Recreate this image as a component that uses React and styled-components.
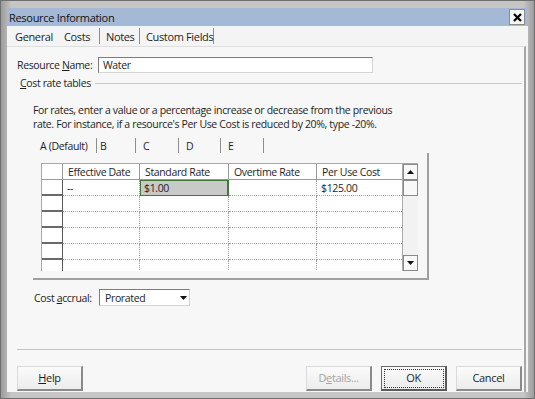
import styled, { createGlobalStyle } from "styled-components";

const GlobalStyle = createGlobalStyle`
  html, body { margin: 0; padding: 0; background: #a9a9a9; }
  body {
    font-family: "Open Sans", "Noto Sans", sans-serif;
    font-size: 10.5px;
    letter-spacing: -0.35px;
    color: #1e1e1e;
    white-space: nowrap;
  }
  * { box-sizing: border-box; }
`;

const Frame = styled.div`
  width: 535px;
  height: 399px;
  border: 1px solid #6e6e6e;
  background: linear-gradient(90deg, #9c9c9c, #c6c6c6 2%, #c6c6c6 98%, #9c9c9c);
  padding: 7px 6px 6px 6px;
  display: flex;
  flex-direction: column;
`;

const TitleBar = styled.div`
  height: 18px;
  background: #a4b9d6;
  display: flex;
  align-items: center;
  justify-content: space-between;
  padding: 0 3px 0 2px;
  font-size: 11px;
  letter-spacing: -0.3px;
  color: #111;
`;

const CloseBox = styled.div`
  width: 16px;
  height: 16px;
  background: #f6f6f6;
  border: 1px solid #8c8c8c;
  display: flex;
  align-items: center;
  justify-content: center;
`;

const Body = styled.div`
  flex: 1;
  display: flex;
  flex-direction: column;
  background: #f4f4f4;
`;

const TabStrip = styled.div`
  height: 20px;
  display: flex;
  align-items: center;
  padding-left: 2px;
`;

const Tab = styled.div`
  width: ${(p) => p.$w}px;
  height: 16px;
  display: flex;
  align-items: center;
  padding-left: ${(p) => p.$pl ?? 6}px;
  border-right: ${(p) => (p.$sep ? "1px solid #8e8e8e" : "none")};
  font-size: 11px;
`;

const Panel = styled.div`
  flex: 1;
  display: flex;
  flex-direction: column;
  border-top: 1px solid #dedede;
  border-right: 2px solid #a6a6a6;
  background: #f7f7f7;
  margin-right: 2px;
`;

const NameRow = styled.div`
  display: flex;
  align-items: center;
  margin: 10px 0 0 10px;
  height: 16px;
`;

const Label = styled.div`
  width: ${(p) => p.$w}px;
`;

const TextInput = styled.div`
  width: 275px;
  height: 16px;
  background: #fff;
  border: 1px solid #d4d4d4;
  border-top-color: #7c7c7c;
  border-left-color: #7c7c7c;
  padding-left: 4px;
  display: flex;
  align-items: center;
`;

const GroupHead = styled.div`
  display: flex;
  align-items: center;
  margin: 3px 2px 0 13px;
  height: 14px;
  gap: 4px;
  &::after {
    content: "";
    flex: 1;
    border-top: 1px solid #c8c8c8;
  }
`;

const Note = styled.p`
  margin: 13px 0 0 26px;
  line-height: 14px;
`;

const SubTabs = styled.div`
  display: flex;
  margin: 7px 0 0 33px;
  height: 15px;
`;

const SubTab = styled.div`
  width: ${(p) => p.$w}px;
  padding-left: ${(p) => p.$pl ?? 7}px;
  border-right: 1px solid #8e8e8e;
  display: flex;
  align-items: center;
`;

const TablePanel = styled.div`
  width: 396px;
  margin-left: 26px;
  padding: 10px 9px 7px 8px;
  border-right: 2px solid #a0a0a0;
  border-bottom: 2px solid #a0a0a0;
`;

const Grid = styled.div`
  display: flex;
  height: 108px;
  border-top: 1px solid #a8a8a8;
  border-left: 1px solid #a8a8a8;
  background: #fff;
`;

const Rows = styled.div`
  width: 362px;
  overflow: hidden;
  display: flex;
  flex-direction: column;
`;

const Row = styled.div`
  display: grid;
  grid-template-columns: 21px 77px 89px 88px 87px;
  height: 16px;
  flex: none;
`;

const HeadCell = styled.div`
  border-right: 1px solid #9a9a9a;
  border-bottom: 1px solid #9a9a9a;
  padding-left: 5px;
  display: flex;
  align-items: center;
  background: #fff;
`;

const RowHead = styled.div`
  border-right: 1px solid #5a5a5a;
  border-bottom: 2px solid #6a6a6a;
  background: #fff;
`;

const Cell = styled.div`
  border-right: 1px dotted #a0a0a0;
  border-bottom: 1px dotted #a0a0a0;
  padding-left: 4px;
  display: flex;
  align-items: center;
  ${(p) =>
    p.$sel &&
    `background: #c9c9c9; border: 1px solid #3f7a34; border-right-width: 2px; padding-left: 3px;`}
`;

const Scroll = styled.div`
  width: 16px;
  display: flex;
  flex-direction: column;
  border-left: 1px solid #a8a8a8;
  background: #f2f2f2;
`;

const ScrollBtn = styled.div`
  height: 16px;
  border: 1px solid #8a8a8a;
  background: #f8f8f8;
  display: flex;
  align-items: center;
  justify-content: center;
`;

const ScrollTrack = styled.div`
  flex: 1;
`;

const AccrualRow = styled.div`
  display: flex;
  align-items: center;
  margin: 9px 0 0 27px;
  height: 17px;
`;

const Select = styled.div`
  width: 91px;
  height: 17px;
  background: #fff;
  border: 1px solid #d4d4d4;
  border-top-color: #7c7c7c;
  border-left-color: #7c7c7c;
  display: flex;
  align-items: center;
  justify-content: space-between;
  padding: 0 2px 0 5px;
`;

const Divider = styled.div`
  margin: auto 2px 0 10px;
  border-top: 1px solid #c4c4c4;
`;

const ButtonRow = styled.div`
  display: flex;
  align-items: center;
  padding: 14px 2px 0 10px;
  height: 42px;
  gap: 9px;
`;

const Button = styled.div`
  width: 66px;
  height: 25px;
  display: flex;
  align-items: center;
  justify-content: center;
  font-size: 11px;
  background: linear-gradient(#fbfbfb, #ececec);
  border: 1px solid #dadada;
  border-right: 2px solid #8a8a8a;
  border-bottom: 2px solid #8a8a8a;
  color: ${(p) => (p.$disabled ? "#a4a4a4" : "#1e1e1e")};
  ${(p) =>
    p.$focus &&
    `border: 1px solid #6a6a6a; border-right: 2px solid #5a5a5a; border-bottom: 2px solid #5a5a5a;
     outline: 1px dotted #333; outline-offset: -4px;`}
`;

const Spacer = styled.div`
  flex: 1;
`;

const U = styled.span`
  text-decoration: underline;
`;

const Arrow = ({ down }) => (
  <svg width="7" height="4" viewBox="0 0 7 4">
    <path d={down ? "M0 0h7L3.5 4z" : "M0 4h7L3.5 0z"} fill="#111" />
  </svg>
);

const data = [
  ["--", "$1.00", "", "$125.00"],
  ["", "", "", ""],
  ["", "", "", ""],
  ["", "", "", ""],
  ["", "", "", ""],
  ["", "", "", ""],
];

export default function App() {
  return (
    <>
      <GlobalStyle />
      <Frame>
        <TitleBar>
          <span>Resource Information</span>
          <CloseBox>
            <svg width="9" height="9" viewBox="0 0 9 9">
              <path d="M1 1l7 7M8 1L1 8" stroke="#000" strokeWidth="2.2" />
            </svg>
          </CloseBox>
        </TitleBar>
        <Body>
          <TabStrip>
            <Tab $w={55}>General</Tab>
            <Tab $w={36} $pl={0} $sep>Costs</Tab>
            <Tab $w={40} $sep>Notes</Tab>
            <Tab $w={74} $sep>Custom Fields</Tab>
          </TabStrip>
          <Panel>
            <NameRow>
              <Label $w={81}>
                Resource <U>N</U>ame:
              </Label>
              <TextInput>Water</TextInput>
            </NameRow>
            <GroupHead>
              <span>
                <U>C</U>ost rate tables
              </span>
            </GroupHead>
            <Note>
              For rates, enter a value or a percentage increase or decrease from the previous
              <br />
              rate. For instance, if a resource's Per Use Cost is reduced by 20%, type -20%.
            </Note>
            <SubTabs>
              <SubTab $w={57} $pl={0}>A (Default)</SubTab>
              <SubTab $w={39} $pl={3}>B</SubTab>
              <SubTab $w={43}>C</SubTab>
              <SubTab $w={42}>D</SubTab>
              <SubTab $w={43}>E</SubTab>
            </SubTabs>
            <TablePanel>
              <Grid>
                <Rows>
                  <Row>
                    <HeadCell />
                    <HeadCell>Effective Date</HeadCell>
                    <HeadCell>Standard Rate</HeadCell>
                    <HeadCell>Overtime Rate</HeadCell>
                    <HeadCell>Per Use Cost</HeadCell>
                  </Row>
                  {data.map((r, i) => (
                    <Row key={i}>
                      <RowHead />
                      <Cell>{r[0]}</Cell>
                      <Cell $sel={i === 0}>{r[1]}</Cell>
                      <Cell>{r[2]}</Cell>
                      <Cell>{r[3]}</Cell>
                    </Row>
                  ))}
                </Rows>
                <Scroll>
                  <ScrollBtn>
                    <Arrow />
                  </ScrollBtn>
                  <ScrollBtn />
                  <ScrollTrack />
                  <ScrollBtn>
                    <Arrow down />
                  </ScrollBtn>
                </Scroll>
              </Grid>
            </TablePanel>
            <AccrualRow>
              <Label $w={65}>
                Cost <U>a</U>ccrual:
              </Label>
              <Select>
                <span>Prorated</span>
                <Arrow down />
              </Select>
            </AccrualRow>
            <Divider />
            <ButtonRow>
              <Button>
                <U>H</U>elp
              </Button>
              <Spacer />
              <Button $disabled>
                D<U>e</U>tails...
              </Button>
              <Button $focus>OK</Button>
              <Button>Cancel</Button>
            </ButtonRow>
          </Panel>
        </Body>
      </Frame>
    </>
  );
}
